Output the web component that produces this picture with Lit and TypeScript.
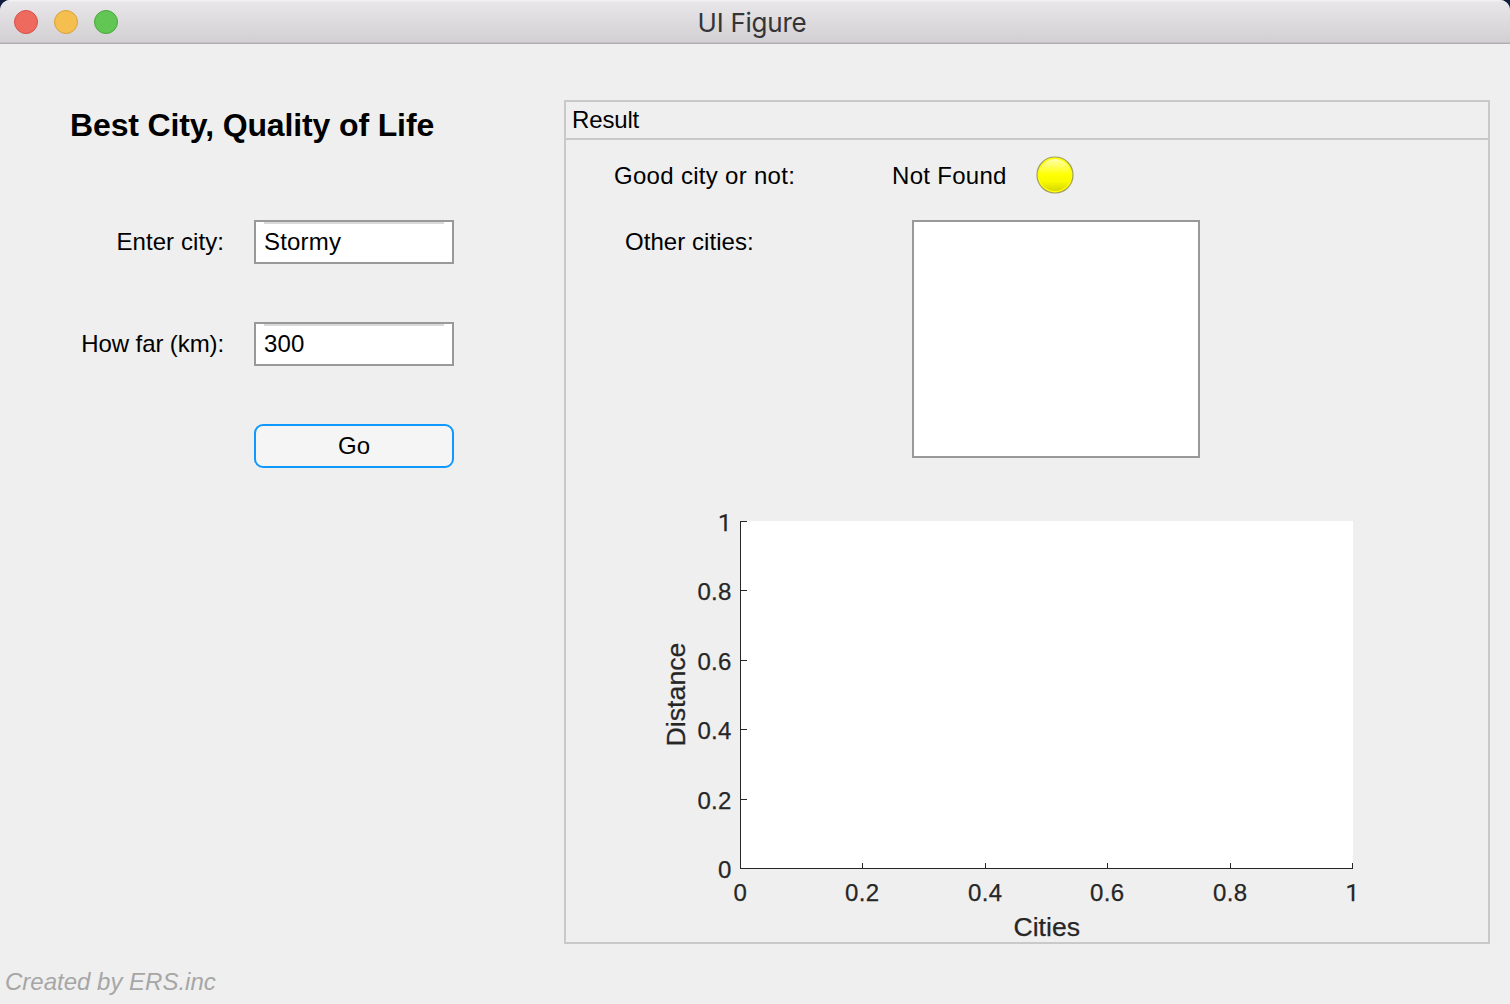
import { LitElement, html, svg, css } from "lit";
import { customElement, state } from "lit/decorators.js";

interface Tick {
  pos: number;
  label: string;
  width: number;
}

const X_TICKS: Tick[] = [
  { pos: 740.5, label: "0", width: 13.3 },
  { pos: 862.5, label: "0.2", width: 34 },
  { pos: 985.5, label: "0.4", width: 34 },
  { pos: 1107.5, label: "0.6", width: 34 },
  { pos: 1230.5, label: "0.8", width: 34 },
  { pos: 1352.5, label: "1", width: 13.3 },
];

const Y_TICKS: Tick[] = [
  { pos: 521.5, label: "1", width: 13.3 },
  { pos: 590.5, label: "0.8", width: 34 },
  { pos: 660.5, label: "0.6", width: 34 },
  { pos: 729.5, label: "0.4", width: 34 },
  { pos: 799.5, label: "0.2", width: 34 },
  { pos: 868.5, label: "0", width: 13.3 },
];

@customElement("distance-chart")
export class DistanceChart extends LitElement {
  static styles = css`
    :host {
      display: block;
    }
    svg {
      display: block;
    }
    text {
      font-family: "Liberation Sans", Arial, sans-serif;
      fill: #262626;
      stroke: #262626;
      stroke-width: 0.25px;
    }
    .tick {
      font-size: 24px;
    }
    .one {
      font-family: Roboto, "Liberation Sans", sans-serif;
    }
    .title {
      font-size: 26.4px;
    }
    .plot {
      fill: #fff;
    }
    .axis {
      stroke: #262626;
      stroke-width: 1;
      fill: none;
      shape-rendering: crispEdges;
    }
  `;

  private tickClass(t: Tick) {
    return t.label === "1" ? "tick one" : "tick";
  }

  render() {
    return html`
      <svg width="922" height="484" viewBox="566 458 922 484">
        <rect class="plot" x="740" y="521" width="613" height="348"></rect>
        <path class="axis" d="M740.5 521V868.5H1353"></path>
        ${X_TICKS.map(
          (t) => svg`
            <path class="axis" d="M${t.pos} 862.5V868.5"></path>
            <text class=${this.tickClass(t)} x=${t.pos - 0.4 - t.width / 2} y="901"
              textLength=${t.width}>${t.label}</text>`
        )}
        ${Y_TICKS.map(
          (t) => svg`
            <path class="axis" d="M740 ${t.pos}H747"></path>
            <text class=${this.tickClass(t)} x=${731.4 - t.width} y=${t.pos + 9}
              textLength=${t.width}>${t.label}</text>`
        )}
        <text class="title" x="1013.5" y="936" textLength="66.5" lengthAdjust="spacingAndGlyphs">Cities</text>
        <text class="title" transform="translate(685 746.5) rotate(-90)" textLength="104"
          lengthAdjust="spacingAndGlyphs">Distance</text>
      </svg>
    `;
  }
}

@customElement("app-root")
export class AppRoot extends LitElement {
  static styles = css`
    :host {
      display: block;
      height: 1004px;
      background: #0f1d3f;
      font-family: "Liberation Sans", Arial, sans-serif;
      font-size: 24px;
      color: #000;
    }
    .window {
      height: 1004px;
      box-sizing: border-box;
      display: flex;
      flex-direction: column;
      background: #efefef;
      border-radius: 10px 10px 0 0;
      overflow: hidden;
    }
    .titlebar {
      flex: none;
      height: 44px;
      box-sizing: border-box;
      display: grid;
      grid-template-columns: 1fr auto 1fr;
      align-items: center;
      padding: 0 20px 0 14px;
      background: linear-gradient(#f6f5f6 0, #e8e6e8 2px, #d2d0d2 42px);
      border-bottom: 1px solid #b0aeb0;
      box-shadow: inset 0 -1px #c4c2c4;
    }
    .lights {
      display: flex;
      gap: 16px;
    }
    .light {
      width: 24px;
      height: 24px;
      box-sizing: border-box;
      border-radius: 50%;
      border: 1px solid;
    }
    .close {
      background: #ee6a5f;
      border-color: #d6504a;
    }
    .minimise {
      background: #f5bf50;
      border-color: #d9a03c;
    }
    .zoom {
      background: #62c655;
      border-color: #4aa73c;
    }
    .caption {
      padding-top: 2px;
      font-family: Inter, Roboto, sans-serif;
      font-size: 26px;
      line-height: 32px;
      letter-spacing: -0.25px;
      color: #353437;
    }
    .content {
      flex: 1;
      display: grid;
      grid-template-columns: 564px 926px;
      grid-template-rows: 900px 1fr;
    }
    .query {
      padding: 63px 110px 0 70px;
    }
    .heading {
      margin: 0 0 77px;
      font-size: 32px;
      line-height: 36px;
      font-weight: 700;
      white-space: nowrap;
      letter-spacing: -0.13px;
    }
    .form {
      display: grid;
      grid-template-columns: 154px 200px;
      grid-auto-rows: 44px;
      gap: 58px 30px;
    }
    .label {
      line-height: 44px;
      text-align: right;
      white-space: nowrap;
      letter-spacing: 0.08px;
    }
    .label.tight {
      letter-spacing: -0.1px;
    }
    .field {
      box-sizing: border-box;
      width: 200px;
      height: 44px;
      margin: 0;
      padding: 0 7px 0 8px;
      border: 2px solid #999;
      border-radius: 0;
      outline: none;
      font: inherit;
      letter-spacing: 0.2px;
      color: #000;
      background: linear-gradient(#d9d9d9, #d9d9d9) 8px 0 / 180px 2px no-repeat #fff;
    }
    .go {
      grid-column: 2;
      box-sizing: border-box;
      border: 2px solid #0d99ff;
      border-radius: 9px;
      background: #f5f5f5;
      padding: 0;
      font: inherit;
      color: #000;
    }
    .panel {
      margin-top: 56px;
      height: 844px;
      box-sizing: border-box;
      border: 2px solid #c9c9c9;
    }
    .panel-title {
      height: 38px;
      box-sizing: border-box;
      padding-left: 6px;
      border-bottom: 2px solid #c9c9c9;
      line-height: 35px;
      letter-spacing: -0.15px;
    }
    .verdict {
      display: flex;
      align-items: center;
      height: 70px;
      padding-left: 48px;
    }
    .question {
      width: 278px;
      padding-top: 2px;
      line-height: 28px;
      letter-spacing: 0.3px;
      white-space: nowrap;
    }
    .answer {
      width: 144px;
      padding-top: 2px;
      line-height: 28px;
      letter-spacing: 0.3px;
      white-space: nowrap;
    }
    .others {
      display: flex;
      height: 238px;
      margin-top: 10px;
      padding-left: 59px;
    }
    .others-label {
      width: 287px;
      line-height: 44px;
      letter-spacing: 0.05px;
    }
    .list {
      width: 288px;
      height: 238px;
      box-sizing: border-box;
      border: 2px solid #999;
      background: #fff;
    }
    .footer {
      grid-column: 1 / -1;
      padding: 24px 0 0 5px;
      line-height: 28px;
      font-style: italic;
      color: #a6a6a6;
    }
  `;

  @state() private city = "Stormy";
  @state() private distance = "300";

  render() {
    return html`
      <div class="window">
        <header class="titlebar">
          <div class="lights">
            <span class="light close"></span>
            <span class="light minimise"></span>
            <span class="light zoom"></span>
          </div>
          <div class="caption">UI Figure</div>
        </header>
        <main class="content">
          <section class="query">
            <h1 class="heading">Best City, Quality of Life</h1>
            <div class="form">
              <label class="label" for="city">Enter city:</label>
              <input class="field" id="city" .value=${this.city} />
              <label class="label tight" for="distance">How far (km):</label>
              <input class="field" id="distance" .value=${this.distance} />
              <button class="go">Go</button>
            </div>
          </section>
          <section class="panel">
            <div class="panel-title">Result</div>
            <div class="verdict">
              <span class="question">Good city or not:</span>
              <span class="answer">Not Found</span>
              <svg class="lamp" width="38" height="38" viewBox="0 0 38 38">
                <defs>
                  <linearGradient id="face" x1="0" y1="0" x2="0" y2="1">
                    <stop offset="0" stop-color="#ffffac"></stop>
                    <stop offset="0.5" stop-color="#ffff00"></stop>
                    <stop offset="0.7" stop-color="#fafa00"></stop>
                    <stop offset="1" stop-color="#d6d600"></stop>
                  </linearGradient>
                </defs>
                <circle cx="19" cy="19" r="18" fill="#ffff00" stroke="#a0a060" stroke-width="1.2"></circle>
                <circle cx="19" cy="19" r="16" fill="url(#face)"></circle>
              </svg>
            </div>
            <div class="others">
              <span class="others-label">Other cities:</span>
              <div class="list"></div>
            </div>
            <distance-chart></distance-chart>
          </section>
          <footer class="footer">Created by ERS.inc</footer>
        </main>
      </div>
    `;
  }
}
